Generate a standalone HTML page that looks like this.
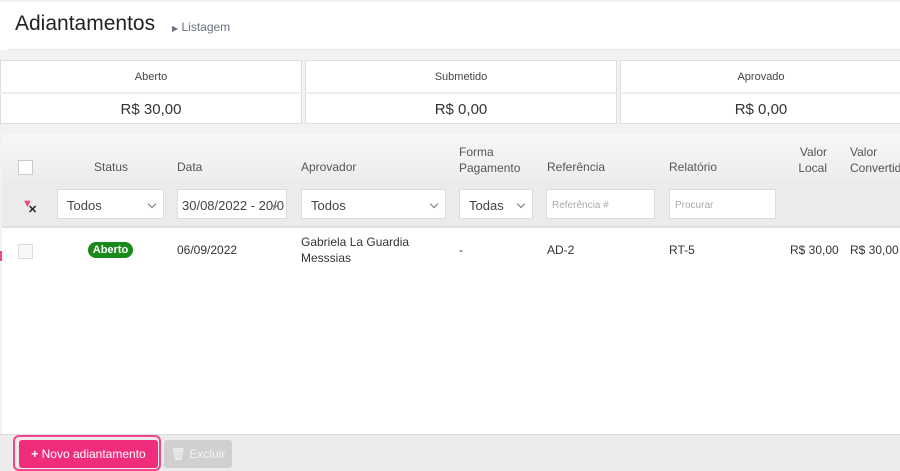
<!DOCTYPE html>
<html><head><meta charset="utf-8"><style>
*{box-sizing:border-box;margin:0;padding:0}
body{width:900px;height:471px;overflow:hidden;background:#f2f2f2;font-family:"Liberation Sans",sans-serif;color:#333;position:relative}
.a{position:absolute}
.card{background:#fff;border:1px solid #ddd}
.sel{background:#fff;border:1px solid #ddd;font-size:13px;color:#444;padding-left:9px;line-height:31px}
.sel:after{content:"";position:absolute;right:8px;top:11px;width:5px;height:5px;border-right:1px solid #777;border-bottom:1px solid #777;transform:rotate(45deg)}
.th{font-size:12px;color:#555}
.td{font-size:12px;color:#333}
</style></head><body>
<div class="a" style="left:0;top:2px;width:900px;height:48px;background:#fff"></div>
<div class="a" style="left:8px;top:49px;width:892px;height:1px;background:#e6e6e6"></div>
<div class="a" style="left:15px;top:12px;font-size:21px;color:#222">Adiantamentos</div>
<div class="a" style="left:172px;top:20px;font-size:12px;color:#6a7280"><span style="font-size:8px">&#9654;</span> Listagem</div>

<div class="a card" style="left:0;top:60px;width:302px;height:64px"></div>
<div class="a card" style="left:305px;top:60px;width:312px;height:64px"></div>
<div class="a card" style="left:620px;top:60px;width:282px;height:64px"></div>
<div class="a" style="left:0;top:92px;width:900px;height:2px;background:#eee"></div>
<div class="a" style="left:0;top:71px;width:302px;text-align:center;font-size:11px;color:#444">Aberto</div>
<div class="a" style="left:305px;top:71px;width:312px;text-align:center;font-size:11px;color:#444">Submetido</div>
<div class="a" style="left:620px;top:71px;width:282px;text-align:center;font-size:11px;color:#444">Aprovado</div>
<div class="a" style="left:0;top:101px;width:302px;text-align:center;font-size:15px;color:#333">R$ 30,00</div>
<div class="a" style="left:305px;top:101px;width:312px;text-align:center;font-size:15px;color:#333">R$ 0,00</div>
<div class="a" style="left:620px;top:101px;width:282px;text-align:center;font-size:15px;color:#333">R$ 0,00</div>

<div class="a" style="left:2px;top:134px;width:898px;height:300px;background:#fff"></div>
<div class="a" style="left:2px;top:134px;width:898px;height:50px;background:linear-gradient(#f7f7f7,#ececec)"></div>
<div class="a" style="left:2px;top:183px;width:898px;height:45px;background:#ebebeb;border-bottom:2px solid #e0e0e0"></div>
<div class="a" style="left:18px;top:160px;width:15px;height:15px;border:1px solid #ccc;background:#fff"></div>
<div class="a th" style="left:94px;top:160px">Status</div>
<div class="a th" style="left:177px;top:160px">Data</div>
<div class="a th" style="left:301px;top:160px">Aprovador</div>
<div class="a th" style="left:459px;top:144px;line-height:16px">Forma<br>Pagamento</div>
<div class="a th" style="left:547px;top:160px">Referência</div>
<div class="a th" style="left:669px;top:160px">Relatório</div>
<div class="a th" style="left:790px;top:144px;line-height:16px;text-align:right;width:37px">Valor<br>Local</div>
<div class="a th" style="left:850px;top:144px;line-height:16px;white-space:nowrap">Valor<br>Convertido</div>

<div class="a" style="left:22px;top:199px;font-size:11px;color:#f0468a;line-height:10px">&#9660;</div>
<div class="a" style="left:28px;top:203px;font-size:11px;font-weight:bold;color:#222">✕</div>
<div class="a sel" style="left:57px;top:189px;width:107px;height:30px">Todos</div>
<div class="a sel" style="left:177px;top:189px;width:110px;height:30px;padding-left:4px;overflow:hidden;white-space:nowrap">30/08/2022 - 20/0</div>
<div class="a sel" style="left:301px;top:189px;width:145px;height:30px">Todos</div>
<div class="a sel" style="left:459px;top:189px;width:74px;height:30px">Todas</div>
<div class="a" style="left:546px;top:189px;width:109px;height:30px;background:#fff;border:1px solid #ddd;font-size:10px;color:#aaa;padding:10px 0 0 5px">Referência #</div>
<div class="a" style="left:669px;top:189px;width:107px;height:30px;background:#fff;border:1px solid #ddd;font-size:10px;color:#aaa;padding:10px 0 0 5px">Procurar</div>

<div class="a" style="left:18px;top:244px;width:15px;height:15px;border:1px solid #ddd;background:#f8f8f8"></div>
<div class="a" style="left:0;top:251px;width:2px;height:10px;background:#f0468a"></div>
<div class="a" style="left:88px;top:242px;width:45px;height:16px;border-radius:8px;background:#1a8a1a;color:#fff;font-size:11px;font-weight:bold;text-align:center;line-height:16px">Aberto</div>
<div class="a td" style="left:177px;top:243px">06/09/2022</div>
<div class="a td" style="left:301px;top:234px;line-height:16px">Gabriela La Guardia<br>Messsias</div>
<div class="a td" style="left:459px;top:243px">-</div>
<div class="a td" style="left:547px;top:243px">AD-2</div>
<div class="a td" style="left:669px;top:243px">RT-5</div>
<div class="a td" style="left:790px;top:243px">R$ 30,00</div>
<div class="a td" style="left:850px;top:243px">R$ 30,00</div>

<div class="a" style="left:0;top:434px;width:900px;height:37px;background:#ececec;border-top:1px solid #ddd"></div>
<div class="a" style="left:13px;top:435px;width:148px;height:36px;border:2px solid #f0468a;border-radius:6px"></div>
<div class="a" style="left:19px;top:440px;width:139px;height:28px;background:#f02d7c;border-radius:3px;color:#fff;font-size:12px;text-align:center;line-height:28px"><b>+</b> Novo adiantamento</div>
<div class="a" style="left:164px;top:440px;width:68px;height:28px;background:#d0d0d0;border-radius:3px;color:#f4f4f4;font-size:12px;text-align:center;line-height:28px">🗑 Excluir</div>
</body></html>
